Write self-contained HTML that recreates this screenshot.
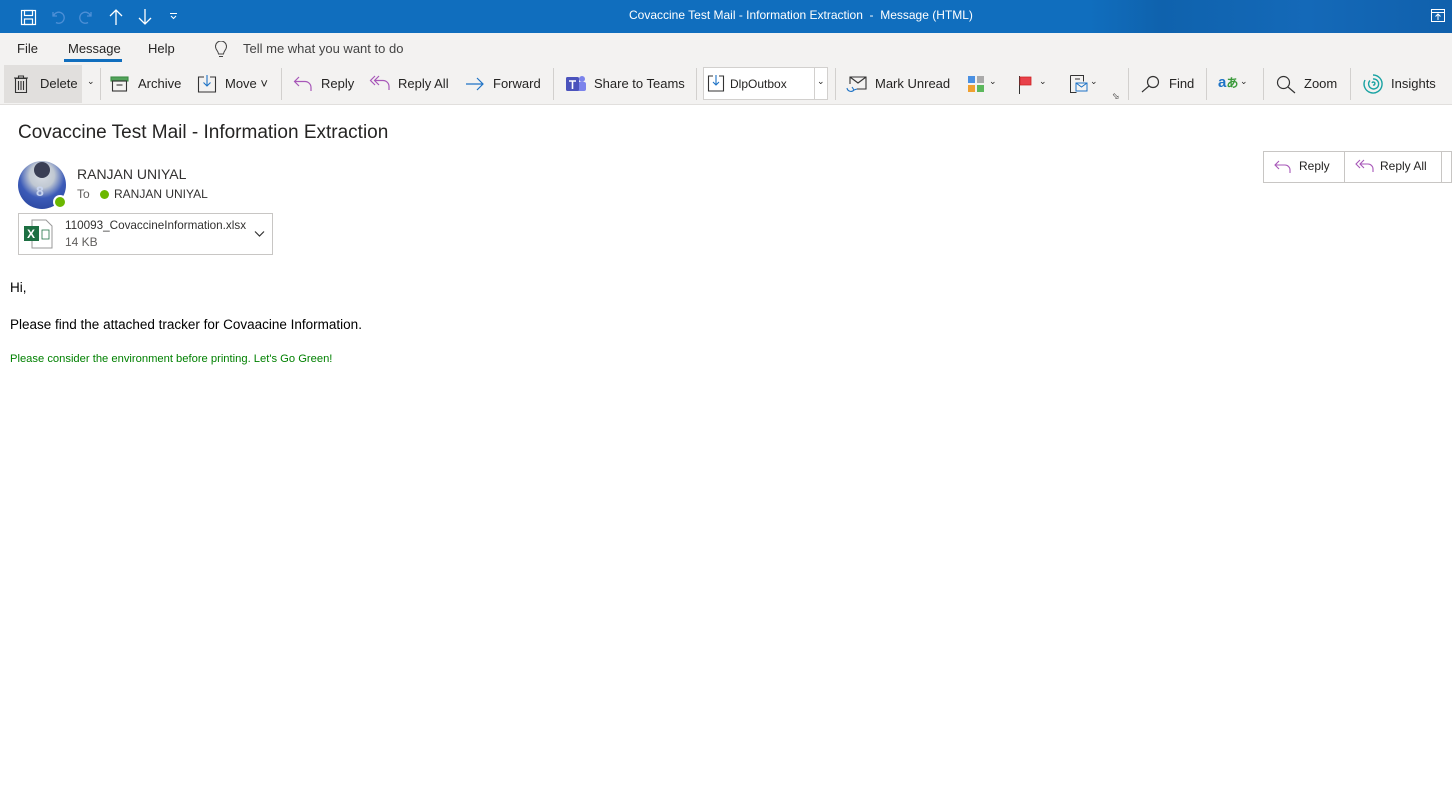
<!DOCTYPE html>
<html><head><meta charset="utf-8"><style>
*{margin:0;padding:0;box-sizing:border-box}
body{width:1452px;height:793px;background:#fff;font-family:"Segoe UI","Liberation Sans",sans-serif;color:#252423;position:relative;overflow:hidden;font-size:13px}
.a{position:absolute;white-space:nowrap}
#tb{position:absolute;left:0;top:0;width:1452px;height:33px;background:linear-gradient(90deg,#106ebe 0,#106ebe 75%,#0f62ad 80%,#1469b8 90%,#1060ac 100%)}
#rb{position:absolute;left:0;top:33px;width:1452px;height:72px;background:#f3f2f1;border-bottom:1px solid #e1dfdd}
.sep{position:absolute;top:68px;width:1px;height:32px;background:#d2d0ce}
svg{position:absolute}
</style></head><body>
<div id="tb"></div>
<svg style="left:20px;top:9px" width="17" height="17" viewBox="0 0 17 17" fill="none" stroke="#fff" stroke-width="1.2"><rect x="1.5" y="1.5" width="14" height="14"/><rect x="4.5" y="1.5" width="8" height="5"/><rect x="4.5" y="10" width="8" height="5.5"/></svg>
<svg style="left:50px;top:9px" width="16" height="16" viewBox="0 0 16 16" fill="none" stroke="#4d8fd6" stroke-width="1.3"><path d="M3 3v4h4M3.5 7A5.5 5.5 0 1 1 6 13.5"/></svg>
<svg style="left:78px;top:9px" width="16" height="16" viewBox="0 0 16 16" fill="none" stroke="#4d8fd6" stroke-width="1.3"><path d="M13 3v4H9M12.5 7A5.5 5.5 0 1 0 10 13.5"/></svg>
<svg style="left:108px;top:8px" width="16" height="18" viewBox="0 0 16 18" fill="none" stroke="#fff" stroke-width="1.3"><path d="M8 17V2M2 8l6-6 6 6"/></svg>
<svg style="left:137px;top:8px" width="16" height="18" viewBox="0 0 16 18" fill="none" stroke="#fff" stroke-width="1.3"><path d="M8 1v15M2 10l6 6 6-6"/></svg>
<svg style="left:169px;top:12px" width="9" height="9" viewBox="0 0 9 9" fill="none" stroke="#fff" stroke-width="1"><path d="M1 1.5h7M2 4l2.5 2.5L7 4"/></svg>
<div class="a" style="left:629px;top:8px;color:#fff;font-size:12px">Covaccine Test Mail - Information Extraction &nbsp;- &nbsp;Message (HTML)</div>
<svg style="left:1431px;top:9px" width="14" height="13" viewBox="0 0 14 13" fill="none" stroke="#fff" stroke-width="1"><rect x="0.5" y="0.5" width="13" height="12"/><path d="M0.5 3.5h13M7 11V5M4.5 7.5L7 5l2.5 2.5"/></svg>
<div id="rb"></div>
<div class="a" style="left:17px;top:41px">File</div>
<div class="a" style="left:68px;top:41px">Message</div>
<div class="a" style="left:64px;top:59px;width:58px;height:3px;background:#106ebe"></div>
<div class="a" style="left:148px;top:41px">Help</div>
<svg style="left:214px;top:41px" width="14" height="18" viewBox="0 0 14 18" fill="none" stroke="#444" stroke-width="1"><path d="M4.5 13c0-3-3-4-3-7.5a5.5 5.5 0 0 1 11 0c0 3.5-3 4.5-3 7.5zM5 15.5h4"/></svg>
<div class="a" style="left:243px;top:41px;color:#444">Tell me what you want to do</div>
<div class="a" style="left:4px;top:65px;width:78px;height:38px;background:#e1dfdd"></div>
<svg style="left:13px;top:75px" width="16" height="18" viewBox="0 0 16 18" fill="none" stroke="#333" stroke-width="1.1"><path d="M1 3h14M5.5 3V1h5v2M2.5 3.5h11v14h-11zM5.5 6v9M8 6v9M10.5 6v9"/></svg>
<div class="a" style="left:40px;top:76px">Delete</div>
<div class="a" style="left:87px;top:76px;font-size:9px">⌄</div>
<div class="sep" style="left:100px"></div>
<svg style="left:110px;top:76px" width="19" height="16" viewBox="0 0 19 16" fill="none" stroke="#333" stroke-width="1.1"><rect x="1" y="1" width="17" height="4" fill="#53a35b" stroke="#3b8d44"/><rect x="2.5" y="5" width="14" height="10"/><path d="M6.5 9h6"/></svg>
<div class="a" style="left:138px;top:76px">Archive</div>
<svg style="left:197px;top:74px" width="20" height="19" viewBox="0 0 20 19" fill="none" stroke="#333" stroke-width="1.1"><path d="M7 3H1.5v15h17V3H13"/><path d="M10 1v11M6.5 8.5L10 12l3.5-3.5" stroke="#1e73c6"/></svg>
<div class="a" style="left:225px;top:76px">Move ˅</div>
<div class="sep" style="left:281px"></div>
<svg style="left:293px;top:76px" width="20" height="16" viewBox="0 0 20 16" fill="none" stroke="#a757b8" stroke-width="1.2"><path d="M6 1L1.5 5.5 6 10M1.5 5.5H12a6 6 0 0 1 6 6V15"/></svg>
<div class="a" style="left:321px;top:76px">Reply</div>
<svg style="left:369px;top:75px" width="22" height="17" viewBox="0 0 22 17" fill="none" stroke="#a757b8" stroke-width="1.2"><path d="M6 1L1.5 5.5 6 10M10 1L5.5 5.5 10 10M5.5 5.5H14a6 6 0 0 1 6 6V15"/></svg>
<div class="a" style="left:398px;top:76px">Reply All</div>
<svg style="left:465px;top:77px" width="20" height="14" viewBox="0 0 20 14" fill="none" stroke="#1e73c6" stroke-width="1.2"><path d="M1 7h17M12 1l6 6-6 6"/></svg>
<div class="a" style="left:493px;top:76px">Forward</div>
<div class="sep" style="left:553px"></div>
<svg style="left:565px;top:74px" width="22" height="20" viewBox="0 0 22 20"><circle cx="17" cy="5" r="3" fill="#7b83eb"/><rect x="12" y="8" width="9" height="9" rx="2" fill="#7b83eb"/><rect x="1" y="3" width="13" height="14" rx="1.5" fill="#4b53bc"/><path d="M4 7h7M7.5 7v8" stroke="#fff" stroke-width="1.6"/></svg>
<div class="a" style="left:594px;top:76px">Share to Teams</div>
<div class="sep" style="left:696px"></div>
<div class="a" style="left:703px;top:67px;width:125px;height:33px;background:#fff;border:1px solid #d2d0ce"></div>
<div class="a" style="left:814px;top:67px;width:1px;height:33px;background:#d2d0ce"></div>
<svg style="left:707px;top:74px" width="19" height="19" viewBox="0 0 19 19" fill="none" stroke="#333" stroke-width="1.1"><path d="M6 2H1.5v15h15V2H12"/><path d="M9 1v10M6 8l3 3 3-3" stroke="#1e73c6"/></svg>
<div class="a" style="left:730px;top:77px;font-size:12px">DlpOutbox</div>
<div class="a" style="left:817px;top:76px;font-size:9px">⌄</div>
<div class="sep" style="left:835px"></div>
<svg style="left:846px;top:75px" width="22" height="20" viewBox="0 0 22 20" fill="none" stroke="#333" stroke-width="1.1"><path d="M4 9V2h16v12h-9M4 2l8 6 8-6"/><path d="M1 13a4 4 0 0 0 7 2M6 12l2 3 3-1" stroke="#1e73c6"/></svg>
<div class="a" style="left:875px;top:76px">Mark Unread</div>
<svg style="left:967px;top:75px" width="20" height="18" viewBox="0 0 20 18"><rect x="1" y="1" width="7" height="7" fill="#4a90e2"/><rect x="10" y="1" width="7" height="7" fill="#aaa"/><rect x="1" y="10" width="7" height="7" fill="#f0a030"/><rect x="10" y="10" width="7" height="7" fill="#5cb85c"/></svg>
<div class="a" style="left:989px;top:76px;font-size:9px">⌄</div>
<svg style="left:1018px;top:75px" width="16" height="19" viewBox="0 0 16 19"><path d="M1.5 1v18" stroke="#333"/><path d="M2 2h11v8H2z" fill="#e8414a" stroke="#c22" stroke-width="0.8"/></svg>
<div class="a" style="left:1039px;top:76px;font-size:9px">⌄</div>
<svg style="left:1069px;top:74px" width="20" height="20" viewBox="0 0 20 20" fill="none" stroke="#333" stroke-width="1"><path d="M1.5 1.5h13v6M1.5 1.5v17h6M6 5h5"/><rect x="7" y="9" width="11" height="8" stroke="#1e73c6"/><path d="M7 9l5.5 4 5.5-4" stroke="#1e73c6"/></svg>
<div class="a" style="left:1090px;top:76px;font-size:9px">⌄</div>
<div class="a" style="left:1112px;top:91px;font-size:9px">⬂</div>
<div class="sep" style="left:1128px"></div>
<svg style="left:1141px;top:75px" width="20" height="18" viewBox="0 0 20 18" fill="none" stroke="#333" stroke-width="1.2"><circle cx="12" cy="7" r="5.5"/><path d="M8 11l-7 6"/></svg>
<div class="a" style="left:1169px;top:76px">Find</div>
<div class="sep" style="left:1206px"></div>
<div class="a" style="left:1218px;top:74px;font-size:15px;color:#1e73c6;font-weight:bold">a<span style="color:#3a9a3a;font-size:12px">あ</span></div>
<div class="a" style="left:1240px;top:76px;font-size:9px">⌄</div>
<div class="sep" style="left:1263px"></div>
<svg style="left:1276px;top:75px" width="20" height="19" viewBox="0 0 20 19" fill="none" stroke="#333" stroke-width="1.2"><circle cx="7.5" cy="7.5" r="6"/><path d="M12 12l7 6"/></svg>
<div class="a" style="left:1304px;top:76px">Zoom</div>
<div class="sep" style="left:1350px"></div>
<svg style="left:1362px;top:73px" width="22" height="22" viewBox="0 0 22 22" fill="none" stroke="#1aa3a3" stroke-width="1.4"><path d="M11 2a9 9 0 1 1-8 5M11 6a5 5 0 1 1-3 1.5M10 10a1.5 1.5 0 1 1 1 2"/></svg>
<div class="a" style="left:1391px;top:76px">Insights</div>

<div class="a" style="left:18px;top:122px;font-size:19px;color:#252423">Covaccine Test Mail - Information Extraction</div>
<div class="a" style="left:18px;top:161px;width:48px;height:48px;border-radius:50%;background:radial-gradient(circle at 50% 30%,#d8dde4 0,#c0c8d2 30%,#3c5bb8 55%,#253f95 100%)"></div>
<div class="a" style="left:34px;top:162px;width:16px;height:16px;border-radius:50%;background:#3a3f55"></div>
<div class="a" style="left:36px;top:183px;font-size:14px;color:#c8d4ef;font-weight:bold">8</div>
<div class="a" style="left:53px;top:195px;width:14px;height:14px;border-radius:50%;background:#6bb700;border:2px solid #fff"></div>
<div class="a" style="left:77px;top:166px;font-size:14px;color:#323130">RANJAN UNIYAL</div>
<div class="a" style="left:77px;top:187px;font-size:12px;color:#605e5c">To</div>
<div class="a" style="left:100px;top:190px;width:9px;height:9px;border-radius:50%;background:#6bb700"></div>
<div class="a" style="left:114px;top:187px;font-size:12px;color:#323130">RANJAN UNIYAL</div>
<div class="a" style="left:18px;top:213px;width:255px;height:42px;border:1px solid #c8c6c4;background:#fff"></div>
<svg style="left:23px;top:219px" width="30" height="30" viewBox="0 0 30 30"><path d="M9 1h14l6 6v22H9z" fill="#fff" stroke="#999"/><rect x="19" y="11" width="7" height="9" fill="none" stroke="#217346" stroke-width="0.8"/><rect x="1" y="7" width="15" height="15" fill="#1d6f42"/><text x="4" y="19" font-family="Liberation Sans" font-weight="bold" font-size="12" fill="#fff">X</text></svg>
<div class="a" style="left:65px;top:219px;font-size:11.7px;color:#323130">110093_CovaccineInformation.xlsx</div>
<div class="a" style="left:65px;top:235px;font-size:12px;color:#605e5c">14 KB</div>
<svg style="left:254px;top:230px" width="11" height="8" viewBox="0 0 11 8" fill="none" stroke="#333" stroke-width="1.2"><path d="M1 1.5l4.5 4.5L10 1.5"/></svg>
<div class="a" style="left:1263px;top:151px;width:189px;height:32px;border:1px solid #c8c6c4;background:#fff"></div>
<div class="a" style="left:1344px;top:151px;width:1px;height:32px;background:#c8c6c4"></div>
<div class="a" style="left:1441px;top:151px;width:1px;height:32px;background:#c8c6c4"></div>
<svg style="left:1274px;top:160px" width="18" height="14" viewBox="0 0 18 14" fill="none" stroke="#a757b8" stroke-width="1.1"><path d="M5 1L1 5l4 4M1 5h10a5 5 0 0 1 5 5v3"/></svg>
<div class="a" style="left:1299px;top:159px;font-size:12px">Reply</div>
<svg style="left:1355px;top:159px" width="20" height="15" viewBox="0 0 20 15" fill="none" stroke="#a757b8" stroke-width="1.1"><path d="M5 1L1 5l4 4M9 1L5 5l4 4M5 5h8a5 5 0 0 1 5 5v3"/></svg>
<div class="a" style="left:1380px;top:159px;font-size:12px">Reply All</div>
<div class="a" style="left:10px;top:280px;color:#000;font-size:13.5px">Hi,</div>
<div class="a" style="left:10px;top:317px;color:#000;font-size:13.5px">Please find the attached tracker for Covaacine Information.</div>
<div class="a" style="left:10px;top:353px;color:#008000;font-size:11.2px">Please consider the environment before printing. Let's Go Green!</div>
</body></html>
